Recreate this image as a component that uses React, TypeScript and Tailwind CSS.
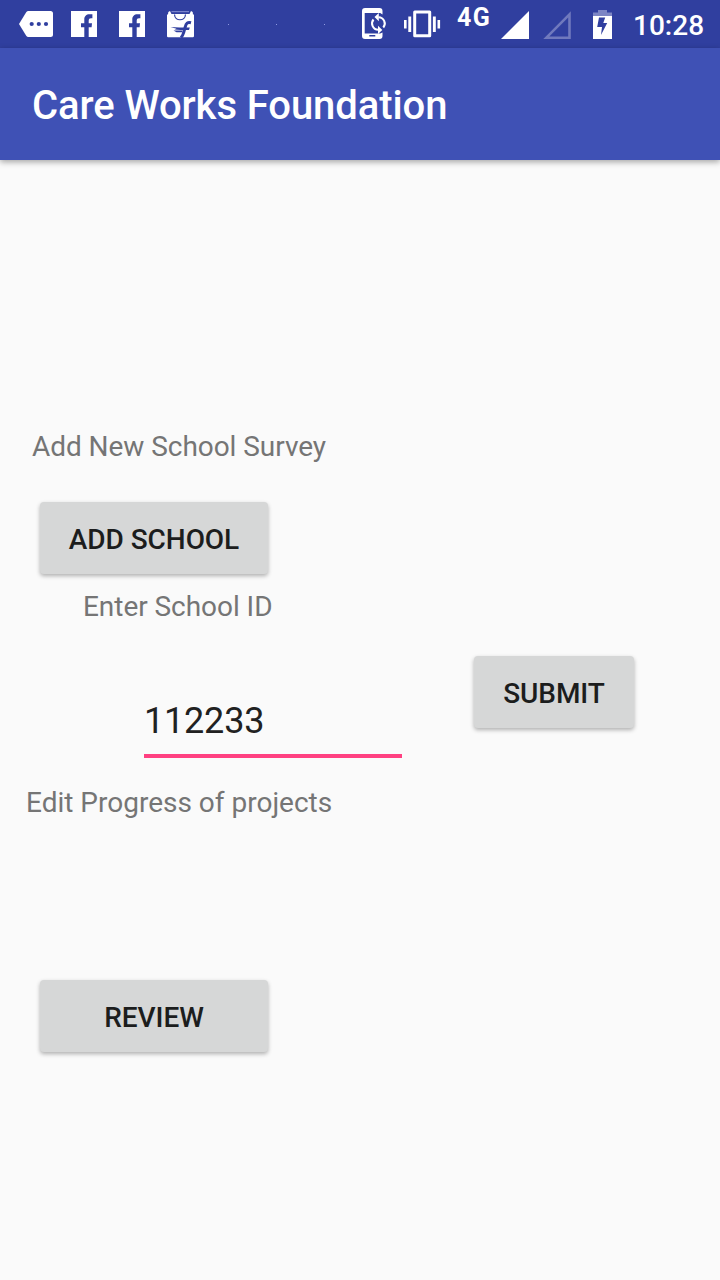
import React from 'react';

const FacebookIcon = () => (
  <svg className="h-12 w-12" viewBox="0 0 48 48">
    <path
      fill="#fff"
      d="M11 11h26v26h-8.300V27.200h2.900l.4-3.900h-3.300v-2.500c0-1.900.8-2.600 2.300-2.600h1.400v-3.900h-2.900c-3.300 0-5.200 2-5.200 5.200v3.800H21v3.900h3.300V37H11z"
    />
  </svg>
);

const MoreTagIcon = () => (
  <svg className="h-12 w-12" viewBox="12 0 48 48">
    <path fill="#fff" d="M28.500 11H50.500a2.500 2.500 0 0 1 2.500 2.500v21a2.500 2.500 0 0 1-2.500 2.500h-22c-1 0-1.800-.4-2.300-1.200L19 24l7.200-11.800c.5-.8 1.300-1.200 2.300-1.200z" />
    <g fill="#303f9f">
      <circle cx="31.700" cy="24" r="2.100" />
      <circle cx="38.800" cy="24" r="2.100" />
      <circle cx="46" cy="24" r="2.100" />
    </g>
  </svg>
);

const ShoppingBagIcon = () => (
  <svg className="h-12 w-12" viewBox="156 0 48 48">
    <path fill="#fff" d="M168.300 12l1.700-1 1.500 3h18l1.500-3 1.700 1 .3 2.500h1V36a1.200 1.200 0 0 1-1.200 1.200h-24.500A1.200 1.200 0 0 1 167 36V14.500h1z" />
    <path fill="#7983cb" d="M171.500 11h17.500v1.200h-17.500z" />
    <path stroke="#303f9f" strokeWidth="1.200" fill="none" d="M174.500 14.500c.4 7 10.600 7 11 0" />
    <path
      stroke="#303f9f"
      strokeWidth="3"
      fill="none"
      d="M191 22.700c-3.500-1-5 .8-5.600 3.800L183.500 33c-.4 1.600-1 3-2.500 4.500"
    />
    <path fill="#303f9f" d="M170.500 27l9 .4h10.300l-.8 2.700h-8.500l-6-.6 2-.8zM173.500 30.500h9l-.5 1.700h-5.500z" />
  </svg>
);

const PlaceholderDot = () => (
  <span className="flex h-12 w-12 items-center justify-center">
    <span className="h-px w-px bg-[#8f9ae0]" />
  </span>
);

const PhoneSyncIcon = () => (
  <svg className="h-12 w-[42px]" viewBox="358 0 42 48">
    <path
      fill="#fff"
      fillRule="evenodd"
      d="M365 8h14.500a3 3 0 0 1 3 3v3.500l-2.300-1.500H364.700v20.500h15.500l2.300-1V36a3 3 0 0 1-3 3H365a3 3 0 0 1-3-3V11a3 3 0 0 1 3-3zm4.300 27v1.500h6V35z"
    />
    <g fill="none" stroke="#fff" strokeWidth="2">
      <path d="M378.600 17.200a6.300 6.300 0 0 1 4.700 10.300" />
      <path d="M378.200 29.800a6.300 6.300 0 0 1-4.700-10.300" />
    </g>
    <path fill="#fff" d="M378.800 13v8.200l-4.300-4.100zM378 25.800V34l4.300-4.100z" />
  </svg>
);

const VibrateIcon = () => (
  <svg className="h-12 w-[50px]" viewBox="400 0 50 48">
    <path fill="none" stroke="#fff" strokeWidth="3" d="M414.700 12h15v23.800h-15z" strokeLinejoin="round" />
    <path fill="#fff" d="M404 20h2.600v8.500H404zM408.300 16.500h2.900v15.500h-2.900zM432.900 16.500h2.900v15.500h-2.900zM437.500 20h2.600v8.500h-2.600z" />
  </svg>
);

const SignalIcons = () => (
  <svg className="h-12 w-[80px]" viewBox="496 0 80 48">
    <path fill="#fff" d="M529 11v28h-28z" />
    <path fill="none" stroke="#7079bd" strokeWidth="2.600" d="M569.500 14.400v23.300h-23.100z" />
  </svg>
);

const BatteryIcon = () => (
  <svg className="h-12 w-[54px]" viewBox="576 0 54 48">
    <path fill="#7c85c4" d="M598 10h9v2.500h5V16h-19v-3.500h5z" />
    <path fill="#fff" d="M593 16h19v23h-19z" />
    <path fill="#303f9f" d="M599 17.500h6.200L603.300 23h3.900l-6.200 12 1-8h-4.800z" />
  </svg>
);

const StatusBar = () => (
  <div className="flex h-12 items-start bg-[#303f9f] pl-3 text-white [&_svg]:shrink-0">
    <MoreTagIcon />
    <FacebookIcon />
    <FacebookIcon />
    <ShoppingBagIcon />
    <PlaceholderDot />
    <PlaceholderDot />
    <PlaceholderDot />
    <div className="ml-[10px] flex">
      <PhoneSyncIcon />
      <VibrateIcon />
      <span className="w-[46px] pt-[6px] pl-[7px] text-[25px] leading-6 font-bold tracking-[1.5px]">4G</span>
      <SignalIcons />
      <BatteryIcon />
      <span className="pt-[10px] pl-[3px] text-[28px] leading-8 font-medium">10:28</span>
    </div>
  </div>
);

const RaisedButton = ({ label, className }: { label: string; className: string }) => (
  <button
    type="button"
    className={`flex h-[72px] items-center justify-center rounded-[4px] bg-[#d6d7d7] pt-[4px] text-[28px] leading-8 font-medium tracking-[-0.05px] text-[#1c1d1d] shadow-[0_2px_4px_rgba(0,0,0,0.3)] ${className}`}
  >
    {label}
  </button>
);

export default function App() {
  return (
    <div className="flex h-[1280px] w-[720px] flex-col overflow-hidden bg-[#fafafa] font-[Roboto,sans-serif]">
      <StatusBar />
      <header className="flex h-28 items-center bg-[#3f51b5] pt-[4px] pl-8 shadow-[0_2px_6px_rgba(0,0,0,0.35)]">
        <h1 className="text-[40px] leading-[48px] font-medium tracking-[-0.08px] text-white">Care Works Foundation</h1>
      </header>
      <main className="flex flex-col items-start pt-[271px] text-[28px] leading-8 tracking-[-0.05px] text-[#757575]">
        <p className="ml-8">Add New School Survey</p>
        <RaisedButton label="ADD SCHOOL" className="mt-[39px] ml-10 w-[228px]" />
        <p className="mt-[17px] ml-[83px]">Enter School ID</p>
        <div className="mt-[33px] flex items-start">
          <input
            type="text"
            defaultValue="112233"
            aria-label="School ID"
            className="ml-[144px] h-[102px] w-[258px] border-b-4 border-[#ff4081] pt-[32px] text-[36px] leading-10 tracking-[-0.2px] text-[#212121] outline-none"
          />
          <RaisedButton label="SUBMIT" className="ml-[72px] w-[160px]" />
        </div>
        <p className="mt-[29px] ml-[26px] tracking-normal">Edit Progress of projects</p>
        <RaisedButton label="REVIEW" className="mt-[161px] ml-10 w-[228px]" />
      </main>
    </div>
  );
}
